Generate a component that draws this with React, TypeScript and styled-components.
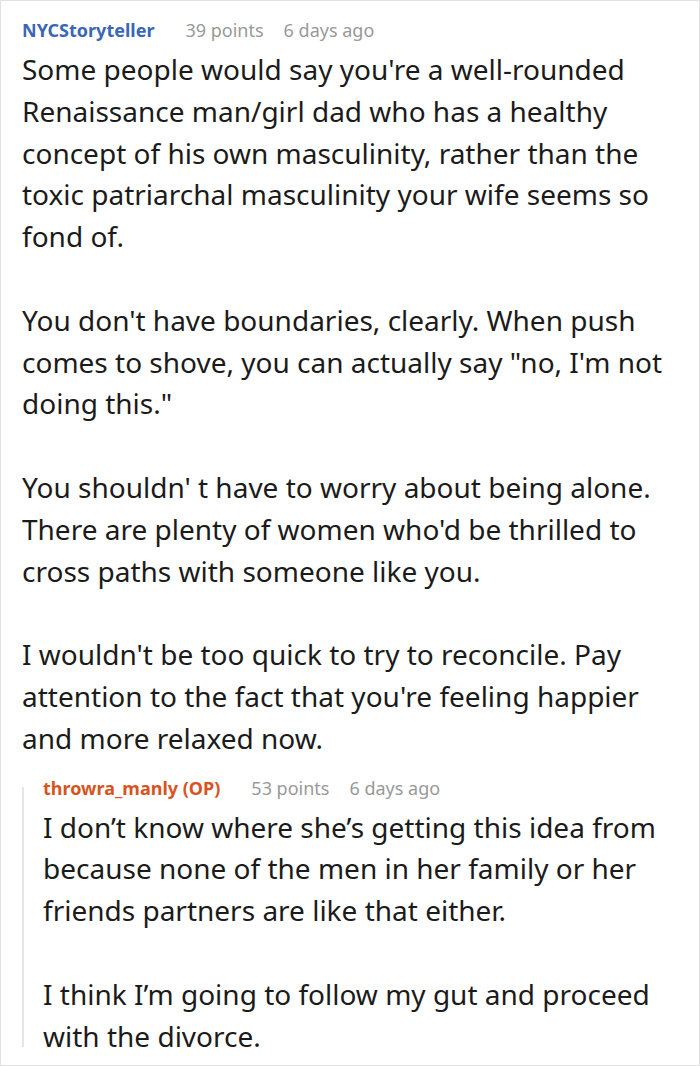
import React, { FC } from "react";
import styled, { createGlobalStyle } from "styled-components";

const GlobalStyle = createGlobalStyle`
  html, body {
    margin: 0;
    padding: 0;
    background: #ffffff;
  }
  body {
    font-family: "Noto Sans", "Open Sans", sans-serif;
  }
`;

const Card = styled.div`
  box-sizing: border-box;
  width: 700px;
  min-height: 1066px;
  border: 1px solid #e2e2e2;
  padding: 17px 12px 6px 21px;
  background: #fff;
`;

const Header = styled.div`
  display: flex;
  align-items: baseline;
  height: 24px;
  line-height: 24px;
  font-size: 18px;
  margin-bottom: 7px;
`;

const Author = styled.span<{ $op?: boolean }>`
  font-weight: 700;
  color: ${(p) => (p.$op ? "#d8541f" : "#3a67b5")};
  margin-right: 31px;
`;

const Meta = styled.span`
  color: #999999;
  margin-right: 20px;
`;

const Body = styled.div`
  font-size: 28px;
  line-height: 41.8px;
  color: #1b1b1b;

  p {
    margin: 0 0 41.8px 0;
  }
  p:last-child {
    margin-bottom: 0;
  }
`;

const Reply = styled.div`
  position: relative;
  margin-top: 16px;
  padding-left: 21px;

  &::before {
    content: "";
    position: absolute;
    left: 0;
    top: 11px;
    bottom: 10px;
    width: 2px;
    background: #e6e6e6;
  }
`;

type CommentProps = {
  author: string;
  points: number;
  age: string;
  op?: boolean;
  paragraphs: string[];
};

const Comment: FC<CommentProps> = ({ author, points, age, op, paragraphs }) => (
  <>
    <Header>
      <Author $op={op}>{author}</Author>
      <Meta>{points} points</Meta>
      <Meta>{age}</Meta>
    </Header>
    <Body>
      {paragraphs.map((text, i) => (
        <p key={i}>{text}</p>
      ))}
    </Body>
  </>
);

const App: FC = () => (
  <>
    <GlobalStyle />
    <Card>
      <Comment
        author="NYCStoryteller"
        points={39}
        age="6 days ago"
        paragraphs={[
          "Some people would say you're a well-rounded Renaissance man/girl dad who has a healthy concept of his own masculinity, rather than the toxic patriarchal masculinity your wife seems so fond of.",
          'You don\'t have boundaries, clearly. When push comes to shove, you can actually say "no, I\'m not doing this."',
          "You shouldn' t have to worry about being alone. There are plenty of women who'd be thrilled to cross paths with someone like you.",
          "I wouldn't be too quick to try to reconcile. Pay attention to the fact that you're feeling happier and more relaxed now.",
        ]}
      />
      <Reply>
        <Comment
          author="throwra_manly (OP)"
          points={53}
          age="6 days ago"
          op
          paragraphs={[
            "I don\u2019t know where she\u2019s getting this idea from because none of the men in her family or her friends partners are like that either.",
            "I think I\u2019m going to follow my gut and proceed with the divorce.",
          ]}
        />
      </Reply>
    </Card>
  </>
);

export default App;
